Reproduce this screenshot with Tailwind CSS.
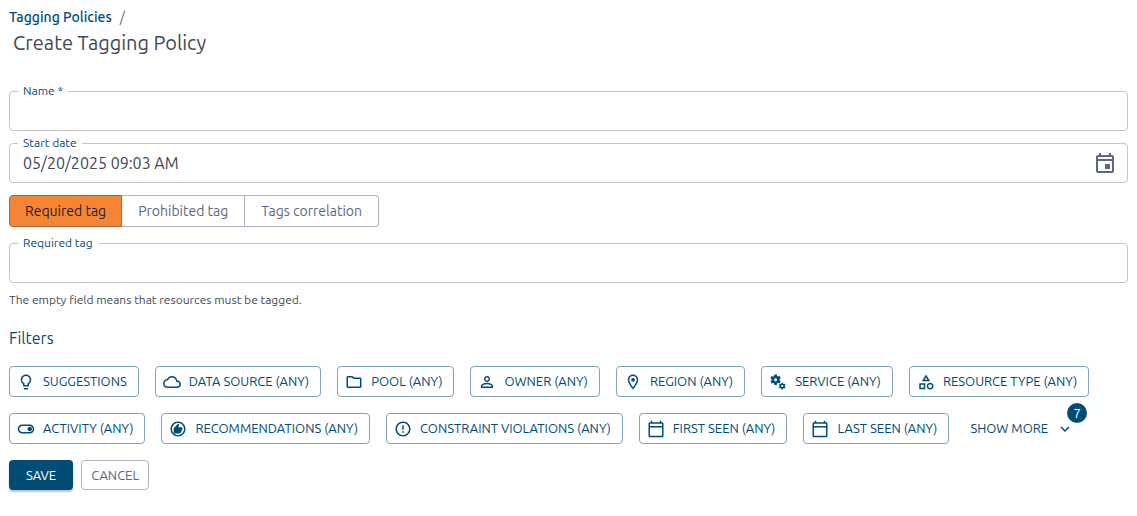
<!DOCTYPE html>
<html lang="en">
<head>
    <meta charset="UTF-8">
    <meta name="viewport" content="width=device-width, initial-scale=1.0">
    <title>Create Tagging Policy</title>
    <script src="https://cdn.jsdelivr.net/npm/@tailwindcss/browser@4"></script>
</head>
<body class="bg-white px-[9px] pt-[7px] pb-6 font-[Ubuntu,'Noto_Sans',sans-serif] text-[#3f4756]">
    <!-- Header -->
    <header>
        <nav aria-label="Breadcrumb" class="flex gap-2 text-sm leading-5 text-[#5c6784]">
            <a href="#" class="font-medium text-[#004c74]">Tagging Policies</a>
            <span>/</span>
        </nav>
        <h1 class="pl-1 text-xl leading-8">Create Tagging Policy</h1>
    </header>

    <form class="mt-8">
        <div class="relative">
            <label for="name" class="absolute -top-2 left-[9px] bg-white px-[5px] text-xs leading-4 text-[#004c74]">Name *</label>
            <input id="name" type="text" class="block h-10 w-full rounded border border-[#c4c4c4] px-[13px]">
        </div>

        <div class="relative mt-3">
            <label for="start-date" class="absolute -top-2 left-[9px] bg-white px-[5px] text-xs leading-4 text-[#004c74]">Start date</label>
            <div class="flex h-10 items-center justify-between rounded border border-[#c4c4c4] pr-[10px] pl-[13px]">
                <input id="start-date" type="text" value="05/20/2025 09:03 AM" class="flex-1 text-base outline-none">
                <button type="button" aria-label="Choose date" class="text-[#5c6784]">
                    <svg class="size-6 fill-current" viewBox="0 0 24 24"><path d="M19 4h-1V2h-2v2H8V2H6v2H5c-1.11 0-1.99.9-1.99 2L3 20c0 1.1.89 2 2 2h14c1.1 0 2-.9 2-2V6c0-1.1-.9-2-2-2zm0 16H5V10h14v10zm0-12H5V6h14v2zm-7 5h5v5h-5z"/></svg>
                </button>
            </div>
        </div>

        <!-- Policy type -->
        <div class="mt-3 flex h-8 text-sm text-[#5c6784]">
            <button type="button" aria-pressed="true" class="rounded-l border border-[#9a6a4c] bg-[#f58535] px-[15px] text-[#1e1e1e]">Required tag</button>
            <button type="button" aria-pressed="false" class="border-y border-r border-[#aeb3c1] px-4">Prohibited tag</button>
            <button type="button" aria-pressed="false" class="rounded-r border-y border-r border-[#aeb3c1] px-4">Tags correlation</button>
        </div>

        <div class="relative mt-4">
            <label for="required-tag" class="absolute -top-2 left-[9px] bg-white px-[5px] text-xs leading-4 text-[#004c74]">Required tag</label>
            <input id="required-tag" type="text" class="block h-10 w-full rounded border border-[#c4c4c4] px-[13px]">
        </div>
        <p class="mt-[7px] text-xs leading-5">The empty field means that resources must be tagged.</p>

        <!-- Filters -->
        <h2 class="mt-4 text-base leading-6 text-[#004c74]">Filters</h2>
        <div class="mt-4 flex flex-wrap gap-4 text-[13px] leading-[23px] text-[#004c74]">
            <button type="button" class="flex items-center gap-2 rounded border border-[#7fa5b9] py-[3px] pr-[11px] pl-[7px]">
                <svg class="size-[18px] fill-current" viewBox="0 0 24 24"><path d="M9 21c0 .55.45 1 1 1h4c.55 0 1-.45 1-1v-1H9v1zm3-19C8.14 2 5 5.14 5 9c0 2.38 1.19 4.47 3 5.74V17c0 .55.45 1 1 1h6c.55 0 1-.45 1-1v-2.26c1.81-1.27 3-3.36 3-5.74 0-3.86-3.14-7-7-7zm2.85 11.1l-.85.6V16h-4v-2.3l-.85-.6C7.8 12.16 7 10.63 7 9c0-2.76 2.24-5 5-5s5 2.24 5 5c0 1.63-.8 3.16-2.15 4.1z"/></svg>
                SUGGESTIONS
            </button>
            <button type="button" class="flex items-center gap-2 rounded border border-[#7fa5b9] py-[3px] pr-[11px] pl-[7px]">
                <svg class="size-[18px] fill-current" viewBox="0 0 24 24"><path d="M19.35 10.04C18.67 6.59 15.64 4 12 4 9.11 4 6.6 5.64 5.35 8.04 2.34 8.36 0 10.91 0 14c0 3.31 2.69 6 6 6h13c2.76 0 5-2.24 5-5 0-2.64-2.05-4.78-4.65-4.96zM19 18H6c-2.21 0-4-1.79-4-4 0-2.05 1.53-3.76 3.56-3.97l1.07-.11.5-.95C8.08 7.14 9.94 6 12 6c2.62 0 4.88 1.86 5.39 4.43l.3 1.5 1.53.11c1.56.1 2.78 1.41 2.78 2.96 0 1.65-1.35 3-3 3z"/></svg>
                DATA SOURCE (ANY)
            </button>
            <button type="button" class="flex items-center gap-2 rounded border border-[#7fa5b9] py-[3px] pr-[11px] pl-[7px]">
                <svg class="size-[18px] fill-current" viewBox="0 0 24 24"><path d="M9.17 6l2 2H20v10H4V6h5.17M10 4H4c-1.1 0-1.99.9-1.99 2L2 18c0 1.1.9 2 2 2h16c1.1 0 2-.9 2-2V8c0-1.1-.9-2-2-2h-8l-2-2z"/></svg>
                POOL (ANY)
            </button>
            <button type="button" class="flex items-center gap-2 rounded border border-[#7fa5b9] py-[3px] pr-[11px] pl-[7px]">
                <svg class="size-[18px] fill-current" viewBox="0 0 24 24"><path d="M12 5.9c1.16 0 2.1.94 2.1 2.1s-.94 2.1-2.1 2.1S9.9 9.16 9.9 8s.94-2.1 2.1-2.1m0 9c2.97 0 6.1 1.46 6.1 2.1v1.1H5.9V17c0-.64 3.13-2.1 6.1-2.1M12 4C9.79 4 8 5.79 8 8s1.79 4 4 4 4-1.79 4-4-1.79-4-4-4zm0 9c-2.67 0-8 1.34-8 4v3h16v-3c0-2.66-5.33-4-8-4z"/></svg>
                OWNER (ANY)
            </button>
            <button type="button" class="flex items-center gap-2 rounded border border-[#7fa5b9] py-[3px] pr-[11px] pl-[7px]">
                <svg class="size-[18px] fill-current" viewBox="0 0 24 24"><path d="M12 2C8.13 2 5 5.13 5 9c0 5.25 7 13 7 13s7-7.75 7-13c0-3.87-3.13-7-7-7zM7 9c0-2.76 2.24-5 5-5s5 2.24 5 5c0 2.88-2.88 7.19-5 9.88C9.92 16.21 7 11.85 7 9z"/><circle cx="12" cy="9" r="2.5"/></svg>
                REGION (ANY)
            </button>
            <button type="button" class="flex items-center gap-2 rounded border border-[#7fa5b9] py-[3px] pr-[11px] pl-[7px]">
                <svg class="size-[18px] fill-current" viewBox="0 0 24 24"><path d="M14.17 13.71l1.4-2.42c.09-.15.05-.34-.08-.45l-1.48-1.16c.03-.22.05-.45.05-.68s-.02-.46-.05-.69l1.48-1.16c.13-.11.17-.3.08-.45l-1.4-2.42c-.09-.15-.27-.21-.43-.15l-1.74.7c-.36-.28-.75-.51-1.18-.69l-.26-1.85c-.03-.16-.18-.29-.35-.29h-2.8c-.17 0-.32.13-.35.3L6.8 4.15c-.42.18-.82.41-1.18.69l-1.74-.7c-.16-.06-.34 0-.43.15l-1.4 2.42c-.09.15-.05.34.08.45l1.48 1.16c-.03.22-.05.45-.05.68s.02.46.05.69l-1.48 1.16c-.13.11-.17.3-.08.45l1.4 2.42c.09.15.27.21.43.15l1.74-.7c.36.28.75.51 1.18.69l.26 1.85c.03.16.18.29.35.29h2.8c.17 0 .32-.13.35-.3l.26-1.85c.42-.18.82-.41 1.18-.69l1.74.7c.16.06.34 0 .43-.15zM8.81 11c-1.1 0-2-.9-2-2s.9-2 2-2 2 .9 2 2-.9 2-2 2zm13.11 7.67l-.96-.74c.02-.14.04-.29.04-.44 0-.15-.01-.3-.04-.44l.95-.74c.08-.07.11-.19.05-.29l-.9-1.55c-.05-.1-.17-.13-.28-.1l-1.11.45c-.23-.18-.48-.33-.76-.44l-.17-1.18c-.01-.12-.11-.2-.21-.2h-1.79c-.11 0-.21.08-.22.19l-.17 1.18c-.27.12-.53.26-.76.44l-1.11-.45c-.1-.04-.22 0-.28.1l-.9 1.55c-.05.1-.04.22.05.29l.95.74c-.02.14-.03.29-.03.44 0 .15.01.3.03.44l-.95.74c-.08.07-.11.19-.05.29l.9 1.55c.05.1.17.13.28.1l1.11-.45c.23.18.48.33.76.44l.17 1.18c.02.11.11.19.22.19h1.79c.11 0 .21-.08.22-.19l.17-1.18c.27-.12.53-.26.75-.44l1.12.45c.1.04.22 0 .28-.1l.9-1.55c.06-.09.03-.21-.05-.28zm-4.29.16c-.74 0-1.35-.6-1.35-1.35s.6-1.35 1.35-1.35 1.35.6 1.35 1.35-.61 1.35-1.35 1.35z"/></svg>
                SERVICE (ANY)
            </button>
            <button type="button" class="flex items-center gap-2 rounded border border-[#7fa5b9] py-[3px] pr-[11px] pl-[7px]">
                <svg class="size-[18px] fill-current" viewBox="0 0 24 24"><path d="M12 2l-5.500 9h11L12 2zm0 3.840L13.930 9h-3.870L12 5.840zM17.500 13c-2.490 0-4.500 2.010-4.500 4.500s2.010 4.500 4.500 4.500 4.500-2.010 4.500-4.500-2.010-4.500-4.500-4.500zm0 7c-1.380 0-2.500-1.120-2.500-2.500s1.120-2.500 2.500-2.500 2.500 1.120 2.500 2.500-1.120 2.500-2.500 2.500zM3 21.500h8v-8H3v8zm2-6h4v4H5v-4z"/></svg>
                RESOURCE TYPE (ANY)
            </button>
            <button type="button" class="flex items-center gap-2 rounded border border-[#7fa5b9] py-[3px] pr-[11px] pl-[7px]">
                <svg class="size-[18px] fill-current" viewBox="0 0 24 24"><path d="M17 6H7c-3.310 0-6 2.690-6 6s2.690 6 6 6h10c3.310 0 6-2.690 6-6s-2.690-6-6-6zm0 10H7c-2.210 0-4-1.790-4-4s1.790-4 4-4h10c2.210 0 4 1.790 4 4s-1.790 4-4 4zm0-7c-1.660 0-3 1.340-3 3s1.340 3 3 3 3-1.340 3-3-1.340-3-3-3z"/></svg>
                ACTIVITY (ANY)
            </button>
            <button type="button" class="flex items-center gap-2 rounded border border-[#7fa5b9] py-[3px] pr-[11px] pl-[7px]">
                <svg class="size-[18px] fill-current" viewBox="0 0 24 24"><path d="M12 2C6.480 2 2 6.480 2 12s4.480 10 10 10 10-4.480 10-10S17.520 2 12 2zm0 18c-4.410 0-8-3.590-8-8s3.590-8 8-8 8 3.590 8 8-3.590 8-8 8z"/><path d="M17 9.500h-4.400l.7-3.300c.1-.4 0-.7-.3-1l-.7-.7-5.600 6c-.3.300-.5.700-.5 1.100v4.900c0 .9.700 1.600 1.600 1.600h6.300c.6 0 1.200-.4 1.500-1l2.300-5c.1-.2.100-.4.100-.6v-1c0-.5-.5-1-1-1z"/></svg>
                RECOMMENDATIONS (ANY)
            </button>
            <button type="button" class="flex items-center gap-2 rounded border border-[#7fa5b9] py-[3px] pr-[11px] pl-[7px]">
                <svg class="size-[18px] fill-current" viewBox="0 0 24 24"><path d="M12 2C6.480 2 2 6.480 2 12s4.480 10 10 10 10-4.480 10-10S17.520 2 12 2zm0 18c-4.410 0-8-3.590-8-8s3.590-8 8-8 8 3.590 8 8-3.590 8-8 8z"/><path d="M11 15h2v2h-2zM11 7h2v6h-2z"/></svg>
                CONSTRAINT VIOLATIONS (ANY)
            </button>
            <button type="button" class="flex items-center gap-2 rounded border border-[#7fa5b9] py-[3px] pr-[11px] pl-[7px]">
                <svg class="size-[18px] fill-current" viewBox="0 0 24 24"><path d="M20 3h-1V1h-2v2H7V1H5v2H4c-1.1 0-2 .9-2 2v16c0 1.1.9 2 2 2h16c1.1 0 2-.9 2-2V5c0-1.1-.9-2-2-2zm0 2v3H4V5h16zM4 21V10h16v11H4z"/></svg>
                FIRST SEEN (ANY)
            </button>
            <button type="button" class="flex items-center gap-2 rounded border border-[#7fa5b9] py-[3px] pr-[11px] pl-[7px]">
                <svg class="size-[18px] fill-current" viewBox="0 0 24 24"><path d="M20 3h-1V1h-2v2H7V1H5v2H4c-1.1 0-2 .9-2 2v16c0 1.1.9 2 2 2h16c1.1 0 2-.9 2-2V5c0-1.1-.9-2-2-2zm0 2v3H4V5h16zM4 21V10h16v11H4z"/></svg>
                LAST SEEN (ANY)
            </button>
            <button type="button" class="relative flex items-center gap-2 py-1 pr-[3px] pl-[5px]">
                SHOW MORE
                <svg class="size-[18px] fill-current" viewBox="0 0 24 24"><path d="M16.59 8.59L12 13.17 7.41 8.59 6 10l6 6 6-6z"/></svg>
                <span class="absolute -top-[10px] -right-[10px] size-5 rounded-full bg-[#004c74] text-center text-[13px] leading-5 text-white">7</span>
            </button>
        </div>

        <div class="mt-4 flex gap-2 text-[13px] leading-[22px]">
            <button type="submit" class="rounded bg-[#004c74] px-[17px] py-1 text-white shadow-[0_2px_2px_rgba(0,0,0,0.25)]">SAVE</button>
            <button type="button" class="rounded border border-[#aeb3c1] px-[9px] py-[3px] text-[#5c6784]">CANCEL</button>
        </div>
    </form>
</body>
</html>
